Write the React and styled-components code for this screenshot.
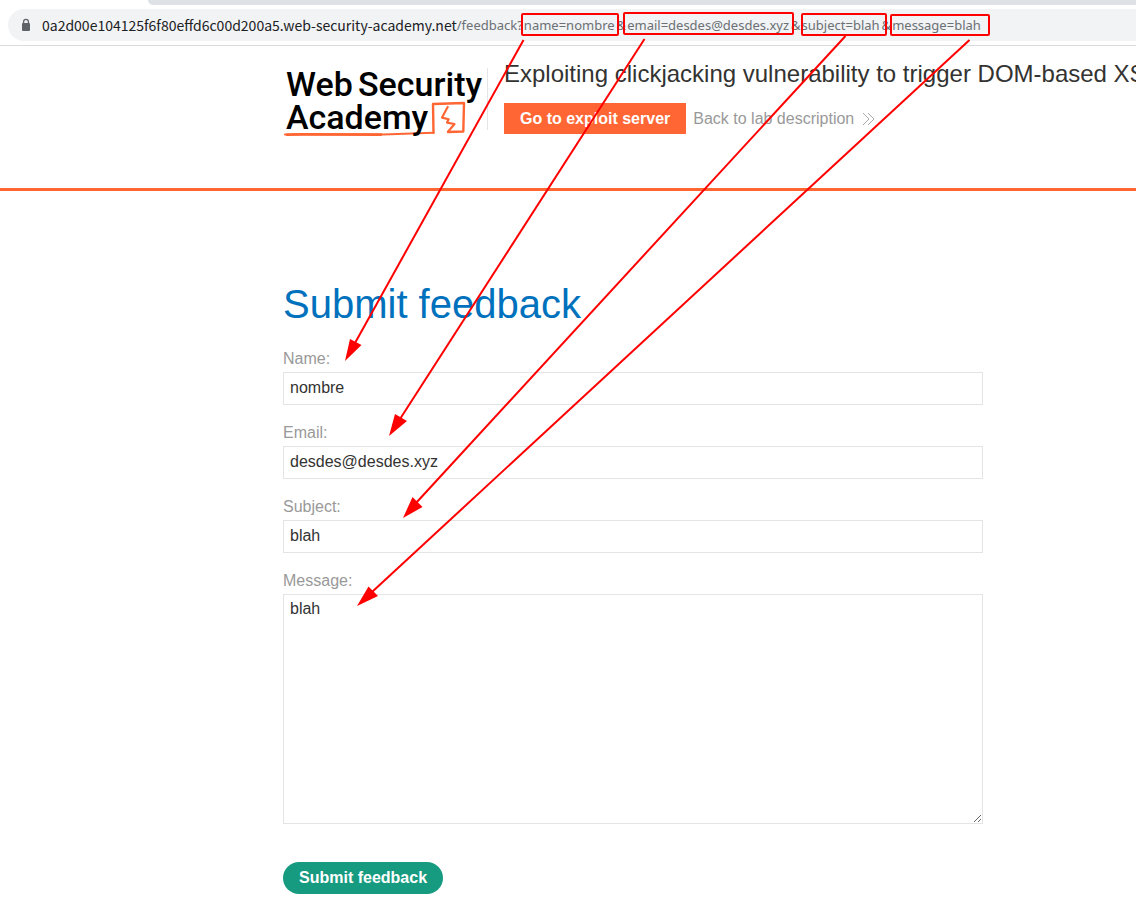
import React from "react";
import styled, { createGlobalStyle } from "styled-components";

const GlobalStyle = createGlobalStyle`
  *, *::before, *::after { box-sizing: border-box; }
  body {
    margin: 0;
    background: #fff;
    color: #333332;
    font-family: "Liberation Sans", Arial, sans-serif;
    font-size: 16px;
  }
`;

const Page = styled.div`
  position: relative;
  min-height: 100vh;
  overflow: hidden;
`;

const Toolbar = styled.div`
  height: 46px;
  border-bottom: 1px solid #d9dadc;
`;

const TabStrip = styled.div`
  height: 5px;
  margin-left: 148px;
  background: #dee1e6;
  border-bottom-left-radius: 8px;
`;

const AddressBar = styled.div`
  display: flex;
  align-items: center;
  height: 32px;
  margin: 4px 0 0 8px;
  padding-left: 12px;
  border-radius: 16px 0 0 16px;
  background: #f1f3f4;
  line-height: 20px;
  white-space: nowrap;
`;

const UrlHost = styled.span`
  margin-left: 10px;
  color: #202124;
  font-family: "Noto Sans CJK SC", "Noto Sans", sans-serif;
  font-size: 14px;
`;

const UrlPath = styled.span`
  color: #6c7074;
  font-family: "Noto Sans", sans-serif;
  font-size: 13px;
`;

const UrlParam = styled.span`
  padding: 0 2px 0 1px;
`;

const LabHeader = styled.header`
  display: flex;
  align-items: flex-start;
  height: 145px;
  padding: 22px 0 0 283px;
  border-bottom: 3px solid #ff6633;
`;

const LogoLink = styled.a`
  flex: none;
  width: 205px;
  height: 62px;
  border-right: 1px solid #e5e5e5;
`;

const LabInfo = styled.div`
  flex: 1;
  min-width: 0;
  margin-top: -8px;
  padding-left: 16px;
`;

const LabTitle = styled.h2`
  margin: 0 0 15px;
  font-size: 24px;
  font-weight: 400;
  line-height: 28px;
  white-space: nowrap;
`;

const LabActions = styled.div`
  display: flex;
  align-items: center;
  gap: 7px;
`;

const ExploitButton = styled.button`
  height: 31px;
  padding: 0 16px;
  border: 0;
  background: #ff6633;
  color: #fff;
  font: bold 16px "Liberation Sans", Arial, sans-serif;
`;

const BackLink = styled.a`
  display: flex;
  align-items: center;
  gap: 8px;
  color: #999;
  text-decoration: none;
`;

const Main = styled.main`
  padding: 91px 24px 12px 283px;
`;

const Heading = styled.h1`
  margin: 0 0 24px;
  color: #0071bc;
  font-size: 40px;
  font-weight: 400;
  line-height: 44px;
`;

const Form = styled.form`
  max-width: 700px;
`;

const Label = styled.label`
  display: block;
  margin-bottom: 4px;
  color: #999;
  line-height: 18px;
`;

const Input = styled.input`
  display: block;
  width: 100%;
  height: 33px;
  margin-bottom: 19px;
  padding: 0 6px 2px;
  border: 1px solid #e4e4e4;
  background: #fff;
  color: #333332;
  font: 16px "Liberation Sans", Arial, sans-serif;
`;

const Message = styled(Input).attrs({ as: "textarea" })`
  height: 230px;
  margin-bottom: 38px;
  padding: 5px 6px;
  resize: both;
`;

const SubmitButton = styled.button`
  height: 32px;
  padding: 0 16px;
  border: 0;
  border-radius: 16px;
  background: #179b80;
  color: #fff;
  font: bold 16px "Liberation Sans", Arial, sans-serif;
`;

const Annotations = styled.svg`
  position: absolute;
  top: 0;
  left: 0;
  pointer-events: none;
`;

const LockIcon = () => (
  <svg width="12" height="14" viewBox="0 0 12 14" aria-hidden="true">
    <rect x="2" y="5" width="8" height="8" rx="1" fill="#5f6368" />
    <path d="M3.6 5.5V3.7a2.4 2.4 0 0 1 4.8 0v1.8" fill="none" stroke="#5f6368" strokeWidth="1.3" />
  </svg>
);

const AcademyLogo = () => (
  <svg width="202" height="72" viewBox="0 0 202 72" role="img" aria-label="Web Security Academy">
    <g fill="none" stroke="#ff6633" strokeLinejoin="round" strokeLinecap="round">
      <path d="M2 66.5 18 66 100 66.4 150.5 64.8" strokeWidth="2" />
      <path d="M4 66.8 20 66.5 98 66.6" strokeWidth="2.6" />
      <path d="M150.5 64.8 150 36 181 35 180.3 63.5 165 64" strokeWidth="2.4" />
      <path d="M164.7 39 159 49.6 165.7 51.3 164 54.6 171.5 56 165 63.8" strokeWidth="2.2" />
    </g>
    <g fill="#000" fontFamily="Roboto, sans-serif" fontWeight="500" fontSize="34">
      <text x="3" y="28">Web</text>
      <text x="75" y="28">Security</text>
      <text x="3" y="61">Academy</text>
    </g>
  </svg>
);

const Chevrons = () => (
  <svg width="14" height="14" viewBox="0 0 14 14" fill="none" stroke="#aaa" aria-hidden="true">
    <path d="M1 1l6 6-6 6M6 1l6 6-6 6" />
  </svg>
);

const highlights = [
  [522, 14, 96, 21],
  [624, 13, 169, 21],
  [802, 14, 84, 21],
  [891, 15, 98, 20],
];

const arrows = [
  { line: "M523.5 40 355 343", head: "345,361 350,339 361.5,345" },
  { line: "M644.5 39 400 419", head: "389,436 395,414 407,421" },
  { line: "M845.5 36 416 503", head: "403,518 412.5,497 422.5,507" },
  { line: "M969.5 40 372 592", head: "357,606 368.5,586.5 378,596" },
];

const fields = [
  { name: "name", label: "Name:", type: "text", value: "nombre" },
  { name: "email", label: "Email:", type: "email", value: "desdes@desdes.xyz" },
  { name: "subject", label: "Subject:", type: "text", value: "blah" },
];

const params = ["name=nombre", "email=desdes@desdes.xyz", "subject=blah", "message=blah"];

export default function App() {
  return (
    <Page>
      <GlobalStyle />
      <Toolbar>
        <TabStrip />
        <AddressBar>
          <LockIcon />
          <UrlHost>0a2d00e104125f6f80effd6c00d200a5.web-security-academy.net</UrlHost>
          <UrlPath>
            /feedback?
            {params.map((param, i) => (
              <React.Fragment key={param}>
                {i > 0 && "&"}
                <UrlParam>{param}</UrlParam>
              </React.Fragment>
            ))}
          </UrlPath>
        </AddressBar>
      </Toolbar>
      <LabHeader>
        <LogoLink href="#">
          <AcademyLogo />
        </LogoLink>
        <LabInfo>
          <LabTitle>Exploiting clickjacking vulnerability to trigger DOM-based XSS</LabTitle>
          <LabActions>
            <ExploitButton type="button">Go to exploit server</ExploitButton>
            <BackLink href="#">
              Back to lab description
              <Chevrons />
            </BackLink>
          </LabActions>
        </LabInfo>
      </LabHeader>
      <Main>
        <Heading>Submit feedback</Heading>
        <Form onSubmit={(e) => e.preventDefault()}>
          {fields.map((f) => (
            <React.Fragment key={f.name}>
              <Label htmlFor={f.name}>{f.label}</Label>
              <Input id={f.name} name={f.name} type={f.type} defaultValue={f.value} />
            </React.Fragment>
          ))}
          <Label htmlFor="message">Message:</Label>
          <Message id="message" name="message" defaultValue="blah" />
          <SubmitButton type="submit">Submit feedback</SubmitButton>
        </Form>
      </Main>
      <Annotations width="1000" height="620" fill="none" stroke="#f00" strokeWidth="2" aria-hidden="true">
        {highlights.map(([x, y, width, height]) => (
          <rect key={x} x={x} y={y} width={width} height={height} rx="1" />
        ))}
        {arrows.map((a) => (
          <g key={a.line}>
            <path d={a.line} />
            <polygon points={a.head} fill="#f00" stroke="none" />
          </g>
        ))}
      </Annotations>
    </Page>
  );
}
